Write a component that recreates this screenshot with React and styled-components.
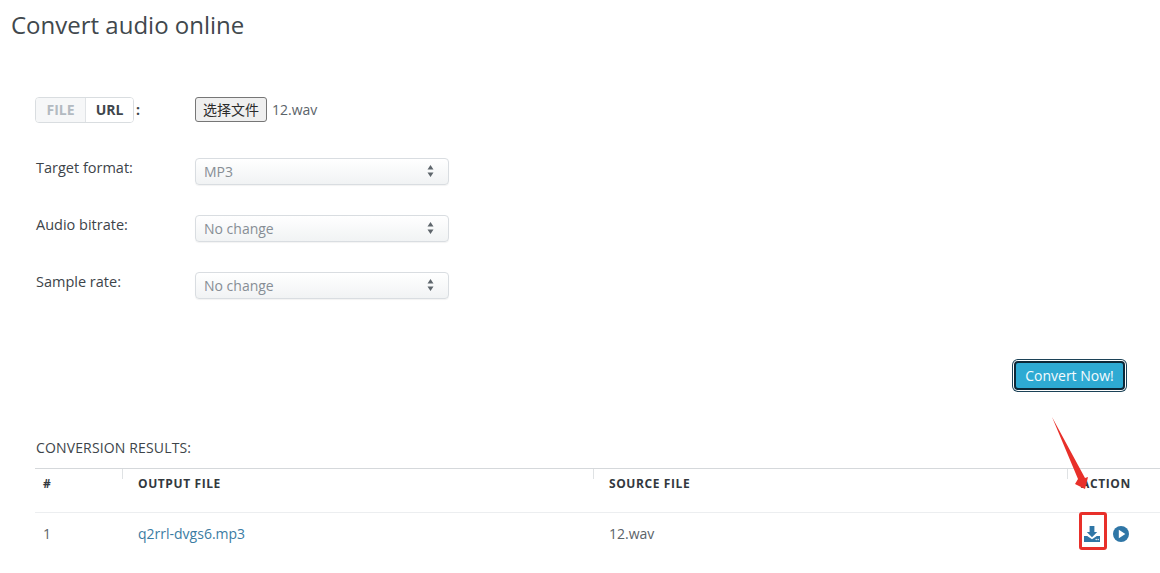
import React from 'react';
import styled, { createGlobalStyle } from 'styled-components';

const GlobalStyle = createGlobalStyle`
  html, body {
    margin: 0;
    padding: 0;
    background: #fff;
    overflow: hidden;
  }
  body {
    font-family: 'Open Sans', 'Noto Sans CJK SC', sans-serif;
    color: #3d4449;
  }
`;

const Page = styled.div`
  position: relative;
  width: 1160px;
  height: 573px;
  overflow: hidden;
`;

const Title = styled.h1`
  margin: 0;
  padding: 8px 0 0 11px;
  height: 35px;
  font-size: 24px;
  line-height: 34px;
  font-weight: 400;
  color: #41484d;
`;

const Content = styled.div`
  padding: 53px 0 0 35px;
`;

const FormRow = styled.div`
  display: grid;
  grid-template-columns: 160px 254px;
  align-items: center;
  height: 27px;
  margin-bottom: ${props => props.$gap}px;
`;

const Label = styled.label`
  padding-left: 1px;
  font-size: 14.5px;
  line-height: 19px;
  color: #3d4449;
  margin-top: -9px;
`;

const SourceLabel = styled.div`
  display: flex;
  align-items: center;
  gap: 2px;
  font-size: 14px;
  font-weight: 700;
`;

const Toggle = styled.div`
  display: flex;
  height: 24px;
  border: 1px solid #d9dde0;
  border-radius: 4px;
  overflow: hidden;
`;

const ToggleItem = styled.span`
  width: ${props => props.$width}px;
  text-align: center;
  font-size: 14px;
  line-height: 24px;
  font-weight: 700;
  color: ${props => (props.$active ? '#b3bac1' : '#3f464c')};
  background: ${props => (props.$active ? '#f6f7f8' : '#fff')};
  border-right: ${props => (props.$active ? '1px solid #e0e3e6' : 'none')};
`;

const FileField = styled.div`
  display: flex;
  align-items: center;
  gap: 5px;
  font-size: 14px;
  color: #5b6369;
`;

const FileButton = styled.button`
  width: 72px;
  height: 25px;
  padding: 0 0 2px;
  border: 1px solid #767676;
  border-radius: 3px;
  background: #efefef;
  font-family: 'Noto Sans CJK SC', sans-serif;
  font-size: 14px;
  color: #2b2b2b;
`;

const Select = styled.div`
  display: flex;
  align-items: center;
  justify-content: space-between;
  box-sizing: border-box;
  height: 27px;
  padding: 0 14px 1px 8px;
  border: 1px solid #d9dde1;
  border-radius: 4px;
  background: linear-gradient(#ffffff, #f1f3f4);
  box-shadow: 0 1px 1px rgba(0, 0, 0, 0.05);
  font-size: 14px;
  color: #878e95;
`;

const SubmitBar = styled.div`
  display: flex;
  justify-content: flex-end;
  padding: 30px 33px 0 0;
`;

const ConvertButton = styled.button`
  width: 111px;
  height: 29px;
  margin: 2px;
  padding: 0;
  border: 2px solid #0c2838;
  border-radius: 4px;
  box-shadow: 0 0 0 1px #ffffff, 0 0 0 2px #1c4257;
  background: #2eaad3;
  font-family: 'Open Sans', sans-serif;
  font-size: 14px;
  font-weight: 500;
  color: #f4fbfe;
`;

const ResultsHeading = styled.h2`
  margin: 46px 0 0;
  padding-left: 1px;
  height: 30px;
  font-size: 14px;
  line-height: 19px;
  font-weight: 400;
  letter-spacing: 0.15px;
  color: #3d4449;
`;

const Table = styled.div`
  width: 1125px;
  border-top: 1px solid #d5d8db;
`;

const Row = styled.div`
  display: grid;
  grid-template-columns: 87px 471px 474px 93px;
  align-items: ${props => (props.$head ? 'start' : 'center')};
  height: 43px;
  border-bottom: ${props => (props.$head ? '1px solid #eceef0' : 'none')};
`;

const HeadCell = styled.div`
  position: relative;
  height: 100%;
  box-sizing: border-box;
  padding: 6px 0 0 ${props => props.$pad}px;
  font-size: 12px;
  line-height: 17px;
  font-weight: 700;
  letter-spacing: 0.6px;
  color: #33393e;

  &::before {
    content: '';
    display: ${props => (props.$divider ? 'block' : 'none')};
    position: absolute;
    left: 0;
    top: 0;
    width: 1px;
    height: 10px;
    background: #dfe2e4;
  }
`;

const Cell = styled.div`
  padding-left: ${props => props.$pad}px;
  font-size: 14px;
  color: #5b6369;
  margin-top: -3px;
`;

const FileLink = styled.a`
  color: #3b7ca3;
  text-decoration: none;
`;

const Actions = styled.div`
  display: flex;
  align-items: center;
  gap: 13px;
  padding-left: 17px;
  margin-top: -2px;
`;

const Highlight = styled.div`
  position: absolute;
  left: 1079px;
  top: 512px;
  width: 28px;
  height: 38px;
  box-sizing: border-box;
  border: 3px solid #e8302a;
  border-radius: 3px;
`;

const Arrow = styled.svg`
  position: absolute;
  left: 1045px;
  top: 412px;
`;

const DownloadIcon = () => (
  <svg width="16" height="16" viewBox="0 0 16 16">
    <path d="M5.6 0h4.8v6h2.8L8 11.2 2.8 6h2.8z" fill="#2f76a6" />
    <path d="M0 10h3.2L8 13.2 12.8 10H16v6H0z" fill="#2f76a6" />
    <circle cx="12.2" cy="13.5" r="0.7" fill="#fff" />
    <circle cx="14.2" cy="13.5" r="0.7" fill="#fff" />
  </svg>
);

const PlayIcon = () => (
  <svg width="16" height="16" viewBox="0 0 16 16">
    <circle cx="8" cy="8" r="8" fill="#2f76a6" />
    <path d="M5.8 3.8v8.4L12.4 8z" fill="#fff" />
  </svg>
);

const SelectArrows = () => (
  <svg width="7" height="12" viewBox="0 0 7 12">
    <path d="M3.5 0l3 4.6h-6zM3.5 12l-3-4.6h6z" fill="#5f666c" />
  </svg>
);

const selects = [
  { label: 'Target format:', value: 'MP3' },
  { label: 'Audio bitrate:', value: 'No change' },
  { label: 'Sample rate:', value: 'No change' },
];

export default function App() {
  return (
    <Page>
      <GlobalStyle />
      <Title>Convert audio online</Title>
      <Content>
        <FormRow $gap={35}>
          <SourceLabel>
            <Toggle>
              <ToggleItem $active $width={49}>FILE</ToggleItem>
              <ToggleItem $width={47}>URL</ToggleItem>
            </Toggle>
            <span>:</span>
          </SourceLabel>
          <FileField>
            <FileButton type="button">选择文件</FileButton>
            <span>12.wav</span>
          </FileField>
        </FormRow>
        {selects.map(item => (
          <FormRow key={item.label} $gap={30}>
            <Label>{item.label}</Label>
            <Select>
              <span>{item.value}</span>
              <SelectArrows />
            </Select>
          </FormRow>
        ))}
        <SubmitBar>
          <ConvertButton type="button">Convert Now!</ConvertButton>
        </SubmitBar>
        <ResultsHeading>CONVERSION RESULTS:</ResultsHeading>
        <Table>
          <Row $head>
            <HeadCell $pad={8}>#</HeadCell>
            <HeadCell $pad={16} $divider>OUTPUT FILE</HeadCell>
            <HeadCell $pad={16} $divider>SOURCE FILE</HeadCell>
            <HeadCell $pad={14} $divider>ACTION</HeadCell>
          </Row>
          <Row>
            <Cell $pad={8}>1</Cell>
            <Cell $pad={16}><FileLink href="#">q2rrl-dvgs6.mp3</FileLink></Cell>
            <Cell $pad={16}>12.wav</Cell>
            <Actions>
              <DownloadIcon />
              <PlayIcon />
            </Actions>
          </Row>
        </Table>
      </Content>
      <Highlight />
      <Arrow width="50" height="82" viewBox="0 0 50 82">
        <path d="M7 5L40 66 43 65 40 77 30 72 33 67z" fill="#e8302a" />
      </Arrow>
    </Page>
  );
}
